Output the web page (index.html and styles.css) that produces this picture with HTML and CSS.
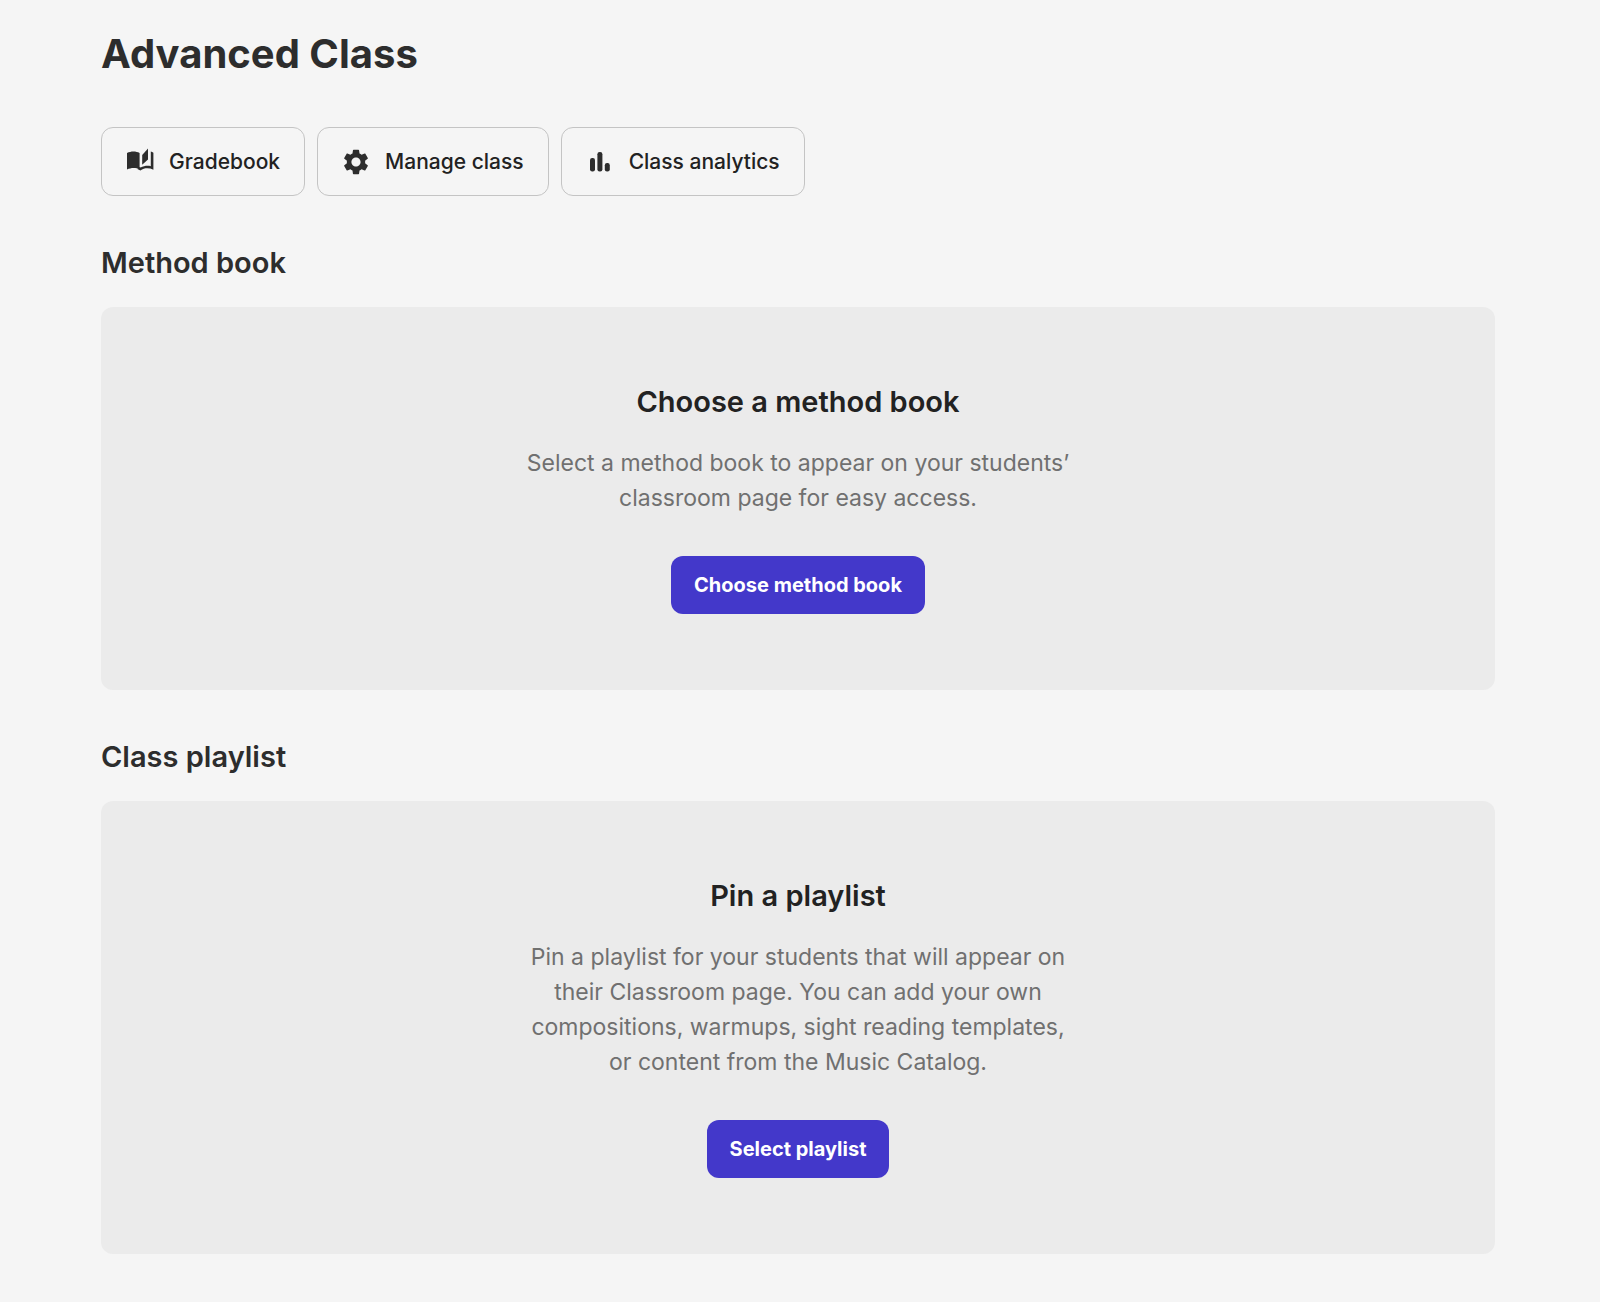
FILE: index.html
```html
<!DOCTYPE html>
<html lang="en">
<head>
  <meta charset="UTF-8">
  <meta name="viewport" content="width=device-width, initial-scale=1.0">
  <title>Advanced Class</title>
  <link rel="stylesheet" href="styles.css">
</head>
<body>
  <main class="page">
    <h1>Advanced Class</h1>

    <div class="actions">
      <button type="button" class="action">
        <svg class="icon" viewBox="0 0 28 28" aria-hidden="true">
          <path d="M1 5C5 3 10 3 13.6 5V21.4C10 19.6 5 19.6 1 21.6Z"/>
          <path d="M16.2 7L22 .6V11.6L16.2 16.8Z"/>
          <path d="M24.8 3.6C25.8 3.9 26.6 4.3 27.4 4.8V21.8C23.2 19.8 18.4 19.8 14.4 22.4C13.4 21.8 12.4 21.2 11.4 20.9L13.6 19L14.6 19.6C17.8 18 21.4 17.4 24.8 18.2Z"/>
        </svg>
        Gradebook
      </button>
      <button type="button" class="action">
        <svg class="icon" viewBox="1 1 22 22" aria-hidden="true">
          <path d="M19.14 12.94c.04-.3.06-.61.06-.94 0-.32-.02-.64-.07-.94l2.03-1.58c.18-.14.23-.41.12-.61l-1.92-3.32c-.12-.22-.37-.29-.59-.22l-2.39.96c-.5-.38-1.03-.7-1.62-.94l-.36-2.54c-.04-.24-.24-.41-.48-.41h-3.84c-.24 0-.43.17-.47.41l-.36 2.54c-.59.24-1.13.57-1.62.94l-2.39-.96c-.22-.08-.47 0-.59.22L2.74 8.87c-.12.21-.08.47.12.61l2.03 1.58c-.05.3-.09.63-.09.94s.02.64.07.94l-2.03 1.58c-.18.14-.23.41-.12.61l1.92 3.32c.12.22.37.29.59.22l2.39-.96c.5.38 1.03.7 1.62.94l.36 2.54c.05.24.24.41.48.41h3.84c.24 0 .44-.17.47-.41l.36-2.54c.59-.24 1.13-.56 1.62-.94l2.39.96c.22.08.47 0 .59-.22l1.92-3.32c.12-.22.07-.47-.12-.61l-2.01-1.58zM12 15.6c-1.98 0-3.6-1.62-3.6-3.6s1.62-3.6 3.6-3.6 3.6 1.62 3.6 3.6-1.62 3.6-3.6 3.6z"/>
        </svg>
        Manage class
      </button>
      <button type="button" class="action">
        <svg class="icon" viewBox="0 0 28 28" aria-hidden="true">
          <rect x="4" y="10" width="5" height="13.5" rx="2.2"/>
          <rect x="11.4" y="4" width="5" height="19.5" rx="2.2"/>
          <rect x="18.8" y="15" width="5" height="8.5" rx="2.2"/>
        </svg>
        Class analytics
      </button>
    </div>

    <section>
      <h2>Method book</h2>
      <div class="panel">
        <h3>Choose a method book</h3>
        <p>Select a method book to appear on your students’ classroom page for easy access.</p>
        <button type="button" class="primary">Choose method book</button>
      </div>
    </section>

    <section>
      <h2>Class playlist</h2>
      <div class="panel">
        <h3>Pin a playlist</h3>
        <p>Pin a playlist for your students that will appear on their Classroom page. You can add your own compositions, warmups, sight reading templates, or content from the Music Catalog.</p>
        <button type="button" class="primary">Select playlist</button>
      </div>
    </section>
  </main>
</body>
</html>
```
FILE: styles.css
```css
* {
  box-sizing: border-box;
}
body {
  margin: 0;
  background-color: #f5f5f5;
  color: #2d2d2d;
  font-family: Inter, "Liberation Sans", sans-serif;
}
.page {
  padding: 30px 105px 48px 101px;
}
h1 {
  margin: 0 0 49px;
  font-size: 40px;
  line-height: 48px;
  font-weight: 700;
}
h2,
h3 {
  margin: 0;
  font-size: 29px;
  line-height: 36px;
  font-weight: 600;
}
h2 {
  margin-bottom: 26px;
}
button {
  font-family: inherit;
  cursor: pointer;
}
.actions {
  display: flex;
  flex-wrap: wrap;
  gap: 12px;
}
.action {
  display: flex;
  align-items: center;
  gap: 15px;
  height: 69px;
  padding: 0 24px;
  border: 1px solid #c4c4c4;
  border-radius: 12px;
  background: none;
  color: #222;
  font-size: 21px;
  font-weight: 500;
}
.icon {
  width: 28px;
  height: 28px;
  fill: #2d2d2d;
}
section {
  margin-top: 49px;
}
.panel {
  display: flex;
  flex-direction: column;
  align-items: center;
  padding: 77px 24px 76px;
  border-radius: 12px;
  background-color: #ebebeb;
  text-align: center;
}
.panel h3 {
  color: #222;
}
.panel p {
  max-width: 548px;
  margin: 26px 0 40px;
  color: #707070;
  font-size: 23px;
  line-height: 35px;
}
.primary {
  height: 58px;
  padding: 0 23px;
  border: 0;
  border-radius: 12px;
  background-color: #4338ca;
  color: #fff;
  font-size: 20px;
  font-weight: 700;
}
```
